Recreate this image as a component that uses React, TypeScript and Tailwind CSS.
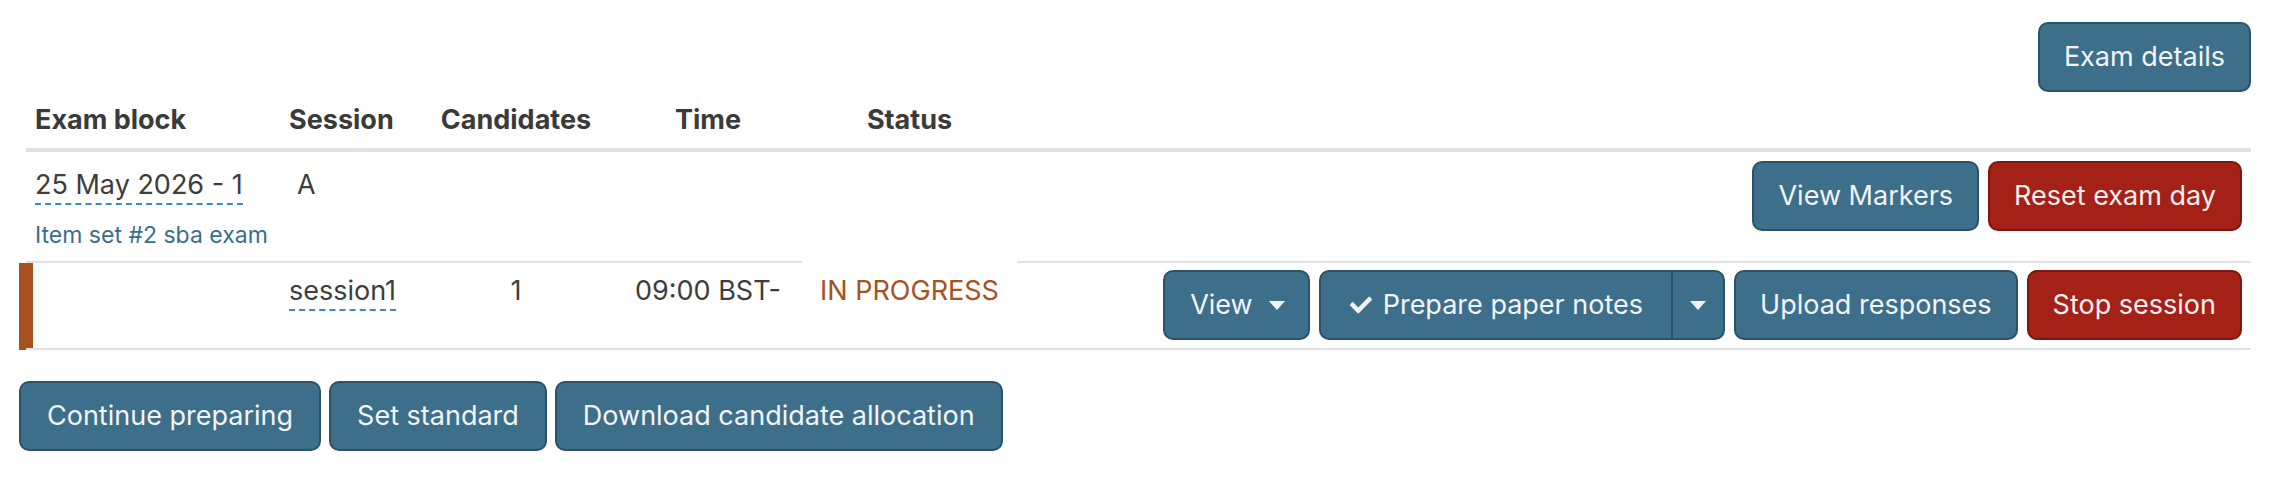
import { FaCheck } from "react-icons/fa";

const btnBlue =
  "inline-flex items-center rounded-[10px] border-2 border-[#2b5268] bg-[#3d6e8a] px-[24px] py-[15px] text-[27px] leading-[36px] text-[#f1f5f9] whitespace-nowrap";
const btnRed =
  "inline-flex items-center rounded-[10px] border-2 border-[#7c1811] bg-[#a42118] px-[24px] py-[15px] text-[27px] leading-[36px] text-[#fbeeee] whitespace-nowrap";

function Caret() {
  return <span className="inline-block h-0 w-0 border-x-[8px] border-t-[9px] border-x-transparent border-t-[#f1f5f9]" />;
}

const cols = "grid grid-cols-[254px_138px_196px_188px_215px_1fr]";

export default function App() {
  return (
    <div className="min-h-screen bg-white pl-[19px] pr-[32px] pt-[22px] font-['Inter',sans-serif] text-[#3d3d3d]">
      <div className="flex justify-end">
        <button className={btnBlue}>Exam details</button>
      </div>

      <div className="ml-[7px]">
        {/* header */}
        <div className={`${cols} border-b-4 border-[#dee2e6] text-[27px] font-bold leading-[36px] text-[#3a3a3a]`}>
          <div className="px-[9px] py-[10px]">Exam block</div>
          <div className="px-[9px] py-[10px]">Session</div>
          <div className="py-[10px] text-center">Candidates</div>
          <div className="py-[10px] text-center">Time</div>
          <div className="py-[10px] text-center">Status</div>
          <div />
        </div>

        {/* exam block row */}
        <div className={`${cols} border-b-2 border-[#dee2e6] text-[27px] leading-[36px]`}>
          <div className="px-[9px] pt-[15px] pb-[10px]">
            <span className="inline-block border-b-2 border-dashed border-[#3b87c9] leading-[36px]">25 May 2026 - 1</span>
            <div className="mt-[15px] text-[23px] leading-[31px] text-[#3b6e8c]">Item set #2 sba exam</div>
          </div>
          <div className="pl-[17px] pt-[15px]">A</div>
          <div />
          <div />
          <div />
          <div className="flex items-start justify-end gap-[9px] pr-[9px] pt-[9px]">
            <button className={btnBlue}>View Markers</button>
            <button className={btnRed}>Reset exam day</button>
          </div>
        </div>

        {/* session row */}
        <div className="-ml-[7px] flex">
          <div className="w-[14px] shrink-0 bg-[#a6521f]" />
          <div className={`${cols} -ml-[7px] flex-1 border-b-2 border-[#dee2e6] text-[27px] leading-[36px]`}>
            <div />
            <div className="px-[9px] pt-[10px]">
              <span className="inline-block border-b-2 border-dashed border-[#3b87c9]">session1</span>
            </div>
            <div className="pt-[10px] text-center">1</div>
            <div className="pt-[10px] text-center">09:00 BST-</div>
            <div className="-mt-[2px] bg-white pt-[12px] text-center text-[#a5521e]">IN PROGRESS</div>
            <div className="flex items-start justify-end gap-[9px] pr-[9px] pt-[7px] pb-[8px]">
              <button className="inline-flex items-center gap-[16px] whitespace-nowrap rounded-[10px] border-2 border-[#2b5268] bg-[#3d6e8a] py-[15px] pl-[25px] pr-[23px] text-[27px] leading-[36px] text-[#f1f5f9]">
                View <Caret />
              </button>
              <div className="flex rounded-[10px] border-2 border-[#2b5268] bg-[#3d6e8a] text-[27px] leading-[36px] text-[#f1f5f9]">
                <button className="inline-flex items-center gap-[11px] whitespace-nowrap border-r-2 border-[#2b5268] py-[15px] pl-[29px] pr-[28px]">
                  <FaCheck size={22} />
                  Prepare paper notes
                </button>
                <button className="inline-flex items-center px-[17px]">
                  <Caret />
                </button>
              </div>
              <button className={btnBlue}>Upload responses</button>
              <button className={btnRed}>Stop session</button>
            </div>
          </div>
        </div>
      </div>

      <div className="mt-[31px] flex gap-[8px]">
        <button className={`${btnBlue} px-[26px]`}>Continue preparing</button>
        <button className={`${btnBlue} px-[26px]`}>Set standard</button>
        <button className={`${btnBlue} px-[26px]`}>Download candidate allocation</button>
      </div>
    </div>
  );
}
